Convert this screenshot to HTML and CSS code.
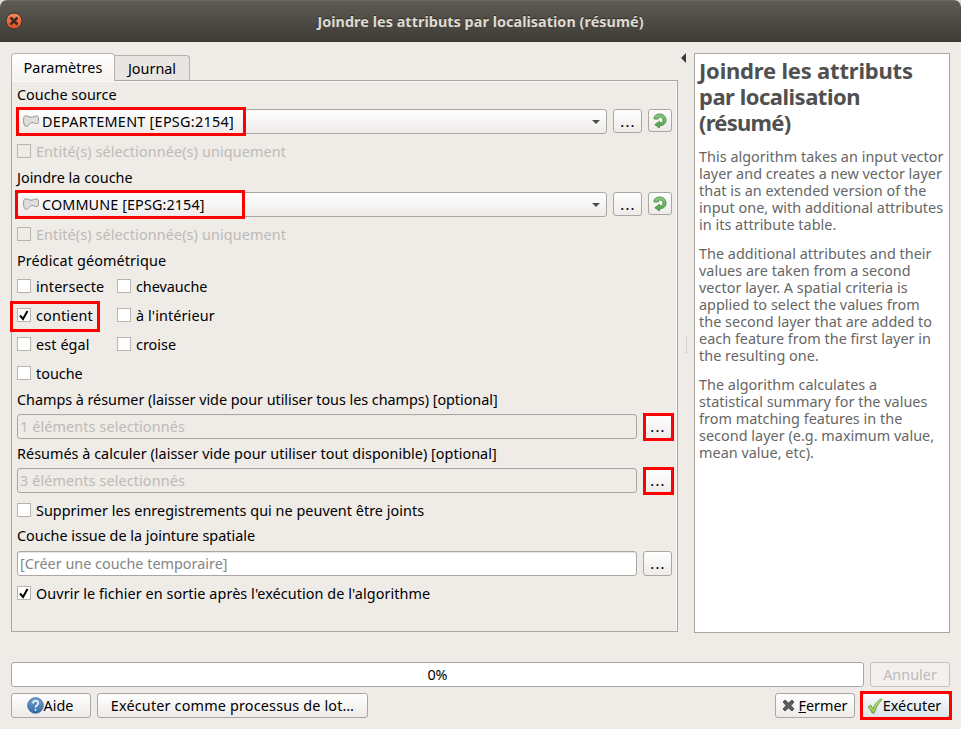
FILE: index.html
```html
<!DOCTYPE html>
<html lang="fr">
<head>
<meta charset="utf-8">
<title>Joindre les attributs par localisation (résumé)</title>
<link rel="stylesheet" href="styles.css">
</head>
<body>
<svg class="defs" width="0" height="0">
  <defs>
    <linearGradient id="green" x1="0" y1="0" x2="0" y2="1"><stop offset="0" stop-color="#8fcb86"/><stop offset="1" stop-color="#4fa04a"/></linearGradient>
    <linearGradient id="blue" x1="0" y1="0" x2="0" y2="1"><stop offset="0" stop-color="#7ba5d3"/><stop offset="1" stop-color="#2f6ba6"/></linearGradient>
    <linearGradient id="orange" x1="0" y1="0" x2="0" y2="1"><stop offset="0" stop-color="#f88a62"/><stop offset="1" stop-color="#dc4a1d"/></linearGradient>
    <linearGradient id="lime" x1="0" y1="0" x2="0" y2="1"><stop offset="0" stop-color="#c3e88a"/><stop offset="1" stop-color="#8fc94a"/></linearGradient>
    <symbol id="polygon" viewBox="0 0 16 12"><path d="M2.200.8C4 .3 5.500 2.200 8 2.200S12 .6 14 .9c1.400.3 1.600 2.500 1.500 4.500-.1 2.300-.4 3.300-1.700 3.300-2 0-2.800-1.300-5-1.100-2.400.2-3 3.500-5.200 3.800C1.500 11.600.7 9 .6 6 .5 3.300.7 1.300 2.200.8z" fill="#dedede" stroke="#949494"/></symbol>
    <symbol id="iterate" viewBox="0 0 14 16"><path d="M1 6C.8 2.500 3.500 1 6.500 1 10.500 1 13 3.500 13 7c0 3.500-2.500 5.700-6.500 5.800V15L1.800 11.700 6.500 8.300v1.800c2.300 0 3.500-1 3.500-3C10 5 8.800 4 7 4 5.300 4 5 5 5.300 6z" fill="url(#green)" stroke="#45913f" stroke-width=".9"/></symbol>
  </defs>
</svg>
<div class="dialog">
  <header class="titlebar">
    <svg class="close" width="18" height="18" viewBox="0 0 18 18"><circle cx="9" cy="9" r="8" fill="url(#orange)" stroke="#35332d"/><path d="M5.500 5.500l7 7M12.500 5.500l-7 7" stroke="#3c2a20" stroke-width="2.500"/></svg>
    <h1 class="title">Joindre les attributs par localisation (résumé)</h1>
  </header>
  <main class="content">
    <section class="left">
      <nav class="tabs"><div class="tab active"><span>Paramètres</span></div><div class="tab"><span>Journal</span></div></nav>
      <div class="panel">
        <div class="label first">Couche source</div>
        <div class="row">
          <div class="combo"><svg width="16" height="12"><use href="#polygon"/></svg><span class="t-dep">DEPARTEMENT [EPSG:2154]</span><i class="arrow"></i><b class="mark mark-source"></b></div>
          <button class="btn more">...</button><button class="btn iterate"><svg width="14" height="16"><use href="#iterate"/></svg></button>
        </div>
        <div class="check disabled"><i class="box"></i><span class="t-ent">Entité(s) sélectionnée(s) uniquement</span></div>
        <div class="label second">Joindre la couche</div>
        <div class="row">
          <div class="combo"><svg width="16" height="12"><use href="#polygon"/></svg><span class="t-com">COMMUNE [EPSG:2154]</span><i class="arrow"></i><b class="mark mark-join"></b></div>
          <button class="btn more">...</button><button class="btn iterate"><svg width="14" height="16"><use href="#iterate"/></svg></button>
        </div>
        <div class="check disabled"><i class="box"></i><span class="t-ent">Entité(s) sélectionnée(s) uniquement</span></div>
        <div class="label third"><span class="t-ent">Prédicat géométrique</span></div>
        <div class="predicates">
          <div class="check"><i class="box"></i><span class="t-ent">intersecte</span></div>
          <div class="check"><i class="box"></i><span class="t-chev">chevauche</span></div>
          <div class="check"><i class="box"><svg width="12" height="12" viewBox="0 0 12 12"><path d="M2 6.500L5 10 9.500 2" /></svg></i><span class="t-cont">contient</span><b class="mark mark-contains"></b></div>
          <div class="check"><i class="box"></i><span class="t-ent">à l'intérieur</span></div>
          <div class="check"><i class="box"></i><span class="t-ent">est égal</span></div>
          <div class="check"><i class="box"></i><span>croise</span></div>
          <div class="check"><i class="box"></i><span>touche</span></div>
        </div>
        <div class="label fields"><span class="t-champs">Champs à résumer (laisser vide pour utiliser tous les champs) [optional]</span></div>
        <div class="row">
          <div class="input off"><span class="t-ent">1 éléments selectionnés</span></div>
          <button class="btn more">...<b class="mark mark-more"></b></button>
        </div>
        <div class="label summaries"><span class="t-resumes">Résumés à calculer (laisser vide pour utiliser tout disponible) [optional]</span></div>
        <div class="row">
          <div class="input off"><span class="t-ent">3 éléments selectionnés</span></div>
          <button class="btn more">...<b class="mark mark-more"></b></button>
        </div>
        <div class="check discard"><i class="box"></i><span class="t-resumes">Supprimer les enregistrements qui ne peuvent être joints</span></div>
        <div class="label output">Couche issue de la jointure spatiale</div>
        <div class="row">
          <div class="input">[Créer une couche temporaire]</div>
          <button class="btn more">...</button>
        </div>
        <div class="check open"><i class="box"><svg width="12" height="12" viewBox="0 0 12 12"><path d="M2 6.500L5 10 9.500 2" /></svg></i><span class="t-ouvrir">Ouvrir le fichier en sortie après l'exécution de l'algorithme</span></div>
      </div>
    </section>
    <div class="splitter"><i class="collapse"></i><i class="grip"></i></div>
    <aside class="help">
      <h2><span class="h-1">Joindre les attributs</span><br><span class="h-2">par localisation</span><br><span class="h-3">(résumé)</span></h2>
      <p>This algorithm takes an input vector<br>layer and creates a new vector layer<br>that is an extended version of the<br>input one, with additional attributes<br>in its attribute table.</p>
      <p>The additional attributes and their<br>values are taken from a second<br>vector layer. A spatial criteria is<br>applied to select the values from<br>the second layer that are added to<br>each feature from the first layer in<br>the resulting one.</p>
      <p>The algorithm calculates a<br>statistical summary for the values<br>from matching features in the<br>second layer (e.g. maximum value,<br>mean value, etc).</p>
    </aside>
  </main>
  <footer class="footer">
    <div class="progress-row"><div class="progress">0%</div><button class="btn cancel">Annuler</button></div>
    <div class="actions">
      <button class="btn aide"><svg width="17" height="17" viewBox="0 0 17 17"><circle cx="8.500" cy="8.500" r="7.800" fill="url(#blue)" stroke="#2c5f93" stroke-width=".8"/><path d="M6 6.500C6 3 11.200 3 11.200 6.300c0 2-2.700 2-2.700 4.200M8.500 12v1.800" fill="none" stroke="#fff" stroke-width="1.500"/></svg><span>Aide</span></button>
      <button class="btn batch"><span class="t-batch">Exécuter comme processus de lot…</span></button>
      <button class="btn fermer"><svg width="13" height="13" viewBox="0 0 13 13"><path d="M1 3l2-2 3.500 3L10 1l2 2-3 3.500 3 3.500-2 2-3.500-3L3 12l-2-2 3-3.500z" fill="#5c5c5c" stroke="#3e3e3e" stroke-width=".8"/></svg><span><u>F</u>ermer</span></button>
      <button class="btn run"><svg width="16" height="16" viewBox="0 0 16 16"><path d="M1 9l2.500-2 2.300 3.500C8 6 10.500 3 14 .8l1 .8C11.500 5 9 9.500 7.200 15H5C4 12.500 2.500 10.500 1 9z" fill="url(#lime)" stroke="#5b8f27" stroke-width=".8"/></svg><span>Exécuter</span><b class="mark mark-run"></b></button>
    </div>
  </footer>
</div>
</body>
</html>
```
FILE: styles.css
```css
* { box-sizing: border-box; }
body { margin: 0; background: #dedede; font: 14.4px/20px "Noto Sans", "Open Sans", sans-serif; color: #000; white-space: nowrap; }
.defs { display: block; position: absolute; }
.dialog { width: 961px; height: 729px; background: #efebe7; border-radius: 7px 7px 0 0; overflow: hidden; }
.titlebar { height: 42px; display: flex; align-items: center; padding: 0 5px 1px; background: linear-gradient(#5e5b53, #3d3b36); border-top: 1px solid #6c6a62; }
.close { display: block; flex: none; margin-bottom: 1px; }
.title { margin: 2px 18px 0 0; flex: 1; text-align: center; font-size: 14.4px; line-height: 20px; letter-spacing: .04px; font-weight: 700; color: #dfdbd2; text-shadow: 0 -1px #2e2c28; }
.content { display: flex; height: 591px; padding: 11px 11px 0; }
.left { width: 667px; }
.tabs { display: flex; align-items: flex-start; height: 27px; }
.tab { width: 75px; height: 25px; margin-top: 2px; display: flex; align-items: center; justify-content: center; padding-top: 2px; border: 1px solid #b5b1ad; border-left: 0; border-bottom: 0; border-radius: 0 4px 0 0; background: #e9e5e2; }
.tab.active { width: 104px; height: 28px; position: relative; z-index: 1; margin-top: 0; padding: 0; border-left: 1px solid #b5b1ad; border-radius: 4px 4px 0 0; background: linear-gradient(#fff, #f4f2ef); letter-spacing: .1px; }
.panel { height: 552px; padding: 0 5px; border: 1px solid #aaa6a2; box-shadow: inset -1px 1px #faf8f6; }
.label { display: flex; align-items: center; }
.first { height: 28px; }
.second { height: 24px; padding-bottom: 4px; }
.third { height: 20px; }
.fields { height: 27px; padding-bottom: 1px; }
.summaries { height: 29px; }
.output { height: 24px; padding-bottom: 6px; }
.row { height: 25px; display: flex; align-items: flex-start; gap: 6px; }
.combo { position: relative; width: 590px; height: 25px; display: flex; align-items: center; gap: 3px; padding: 0 6px 0 5px; border: 1px solid #aaa6a2; border-radius: 3px; background: linear-gradient(#fff, #eeebe9); }
.combo svg { margin-bottom: 1px; }
.arrow { margin-left: auto; border: 4px solid transparent; border-top: 4px solid #4c4c4c; border-bottom: 0; }
.btn { position: relative; display: flex; align-items: center; justify-content: center; height: 25px; padding: 0; border: 1px solid #aaa6a2; border-radius: 3px; background: linear-gradient(#fff, #eeebe9); color: #000; font: inherit; white-space: nowrap; }
.more { width: 29px; height: 24px; padding: 2px 0 0 1px; font-weight: 500; letter-spacing: 1.2px; }
.input + .more { height: 25px; padding-top: 1px; }
.iterate { width: 24px; height: 23px; }
.check { position: relative; display: flex; align-items: center; gap: 5px; height: 34px; }
.check span { padding-top: 2px; }
.box { width: 14px; height: 14px; display: block; flex: none; border: 1px solid #b8b4b0; background: #fff; }
.box svg { display: block; fill: none; stroke: #000; stroke-width: 2; }
.disabled { color: #bebab6; }
.disabled .box { background: #efebe7; }
.predicates { display: grid; grid-template-columns: 100px 100px; grid-auto-rows: 29px; }
.predicates .check { height: 29px; }
.discard { height: 34px; }
.open { height: 34px; }
.input { width: 620px; height: 25px; display: flex; align-items: center; padding-left: 2px; border: 1px solid #aaa6a2; border-radius: 3px; background: #fff; color: #858585; box-shadow: inset 0 1px #e8e6e3; }
.off { background: #efebe7; color: #bebab6; }
.mark { position: absolute; display: block; border: 3px solid #f00; }
.mark-source { left: -2px; top: -3px; width: 230px; height: 29px; }
.mark-join { left: -3px; top: -3px; width: 230px; height: 29px; }
.mark-contains { left: -7px; top: 1px; width: 90px; height: 31px; }
.mark-more { left: -1px; top: -2px; width: 31px; height: 28px; }
.mark-run { left: -2px; top: -3px; width: 92px; height: 29px; }
.splitter { width: 16px; display: flex; flex-direction: column; align-items: center; }
.collapse { margin: 0 5px 0 0; border: 5px solid transparent; border-left: 0; border-right: 5px solid #3c3c3c; }
.grip { margin-top: 273px; height: 17px; border-left: 1px dotted #bab6b2; }
.help { width: 256px; height: 580px; padding: 3px 4px; border: 1px solid #aaa6a2; background: #fff; color: #666; line-height: 17px; letter-spacing: .03px; }
.help h2 { margin: 0 0 13px; font-size: 22px; line-height: 26px; font-weight: 700; color: #505050; }
.help p { margin: 0 0 12px; }
.h-1 { letter-spacing: -.2px; }
.h-2 { letter-spacing: -.5px; }
.h-3 { letter-spacing: -.75px; }
.t-dep { letter-spacing: .27px; }
.t-com { letter-spacing: .1px; }
.t-ent { letter-spacing: .11px; }
.t-cont { letter-spacing: .15px; }
.t-chev { letter-spacing: -.05px; }
.t-champs { letter-spacing: -.035px; }
.t-resumes { letter-spacing: .03px; }
.t-ouvrir { letter-spacing: .07px; }
.t-batch { letter-spacing: .17px; }
.footer { padding: 29px 11px 0; }
.progress-row, .actions { display: flex; gap: 6px; }
.progress { width: 853px; height: 25px; display: flex; align-items: center; justify-content: center; border: 1px solid #aaa6a2; border-radius: 3px; background: #fff; }
.cancel { width: 80px; color: #bebab6; border-color: #c5c1bd; background: #f3f1ef; }
.actions { margin-top: 6px; }
.aide { width: 80px; padding-right: 2px; }
.batch { width: 271px; }
.fermer { width: 80px; gap: 3px; margin-left: auto; }
.run { width: 89px; padding-right: 3px; background: linear-gradient(#fbfcfd, #dbe4e9); }
```
